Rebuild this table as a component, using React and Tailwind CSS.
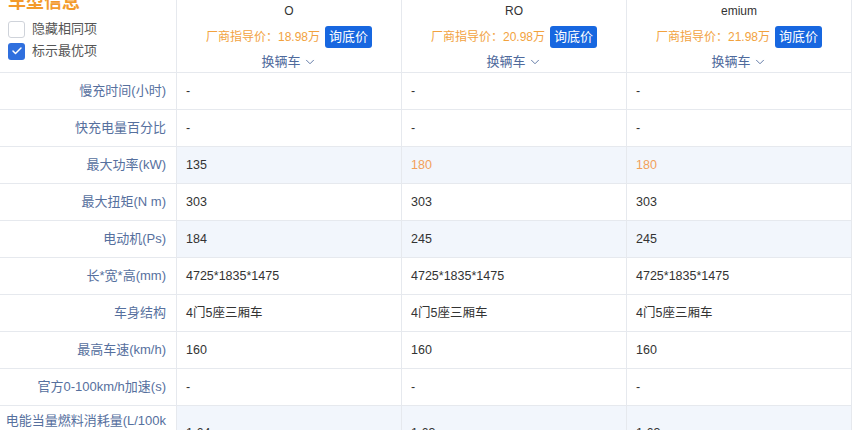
import { ChevronDown, Check } from 'lucide-react';

const cars = [
  { name: 'O', price: '18.98万' },
  { name: 'RO', price: '20.98万' },
  { name: 'emium', price: '21.98万' },
];

const rows = [
  { label: '慢充时间(小时)', values: ['-', '-', '-'] },
  { label: '快充电量百分比', values: ['-', '-', '-'] },
  { label: '最大功率(kW)', values: ['135', '180', '180'], diff: true, best: [1, 2] },
  { label: '最大扭矩(N m)', values: ['303', '303', '303'] },
  { label: '电动机(Ps)', values: ['184', '245', '245'], diff: true },
  { label: '长*宽*高(mm)', values: ['4725*1835*1475', '4725*1835*1475', '4725*1835*1475'] },
  { label: '车身结构', values: ['4门5座三厢车', '4门5座三厢车', '4门5座三厢车'] },
  { label: '最高车速(km/h)', values: ['160', '160', '160'] },
  { label: '官方0-100km/h加速(s)', values: ['-', '-', '-'] },
];

const font = { fontFamily: '"Liberation Sans", "Noto Sans CJK SC", sans-serif' };

export default function App() {
  return (
    <div className="w-[852px] h-[430px] overflow-hidden bg-white" style={font}>
      <div className="-mt-[27px] grid grid-cols-[177px_225px_225px_225px]">
        {/* header (scrolled, top part hidden) */}
        <div className="h-[100px] border-b border-r border-[#e6e9ee] pt-[19px] pl-[8px]">
          <div className="text-[18px] leading-[20px] font-bold text-[#f39a2b]">车型信息</div>
          <div className="mt-[8px] flex items-center h-[18px] gap-[7px]">
            <span className="w-[17px] h-[17px] rounded-[3px] border border-[#cfd3da] bg-white" />
            <span className="text-[13px] text-[#555]">隐藏相同项</span>
          </div>
          <div className="mt-[4px] flex items-center h-[18px] gap-[7px]">
            <span className="w-[17px] h-[17px] rounded-[3px] bg-[#2f6fde] flex items-center justify-center">
              <Check size={12} strokeWidth={3} className="text-white" />
            </span>
            <span className="text-[13px] text-[#555]">标示最优项</span>
          </div>
        </div>
        {cars.map((c, i) => (
          <div key={i} className="h-[100px] border-b border-r border-[#e6e9ee] pt-[30px] flex flex-col items-center">
            <div className="text-[12px] leading-[17px] text-[#333] text-center">{c.name}</div>
            <div className="mt-[6px] flex items-center gap-[5px]">
              <span className="text-[12px] text-[#f2a23e]">厂商指导价：{c.price}</span>
              <button className="w-[47px] h-[22px] rounded-[3px] bg-[#1767e0] text-white text-[13px] leading-[22px]">
                询底价
              </button>
            </div>
            <div className="mt-[5px] flex items-center gap-[2px] text-[13px] leading-[17px] text-[#4f6a9c]">
              换辆车
              <ChevronDown size={14} strokeWidth={1.5} />
            </div>
          </div>
        ))}

        {/* body */}
        {rows.map((r, ri) => (
          <Row key={ri} row={r} />
        ))}

        <div className="h-[56px] border-b border-r border-[#e6e9ee] flex items-start justify-end pt-[5px] pr-[10px]">
          <span className="text-[13px] leading-[20px] text-right text-[#56709e] whitespace-nowrap">
            电能当量燃料消耗量(L/100k
            <br />
            m)
          </span>
        </div>
        {['1.64', '1.63', '1.63'].map((v, i) => (
          <div key={i} className="h-[56px] border-b border-r border-[#e6e9ee] bg-[#f2f6fc] flex items-center pl-[9px] text-[12.5px] text-[#333]">
            {v}
          </div>
        ))}
      </div>
    </div>
  );
}

function Row({ row }) {
  return (
    <>
      <div className="h-[37px] border-b border-r border-[#e6e9ee] flex items-center justify-end pr-[10px] text-[13px] text-[#56709e] whitespace-nowrap">
        {row.label}
      </div>
      {row.values.map((v, i) => {
        const best = row.best && row.best.includes(i);
        return (
          <div
            key={i}
            className={`h-[37px] border-b border-r border-[#e6e9ee] flex items-center pl-[9px] text-[12.5px] ${
              row.diff ? 'bg-[#f2f6fc]' : 'bg-white'
            } ${best ? 'text-[#f2a05a]' : 'text-[#333]'}`}
          >
            {v}
          </div>
        );
      })}
    </>
  );
}
